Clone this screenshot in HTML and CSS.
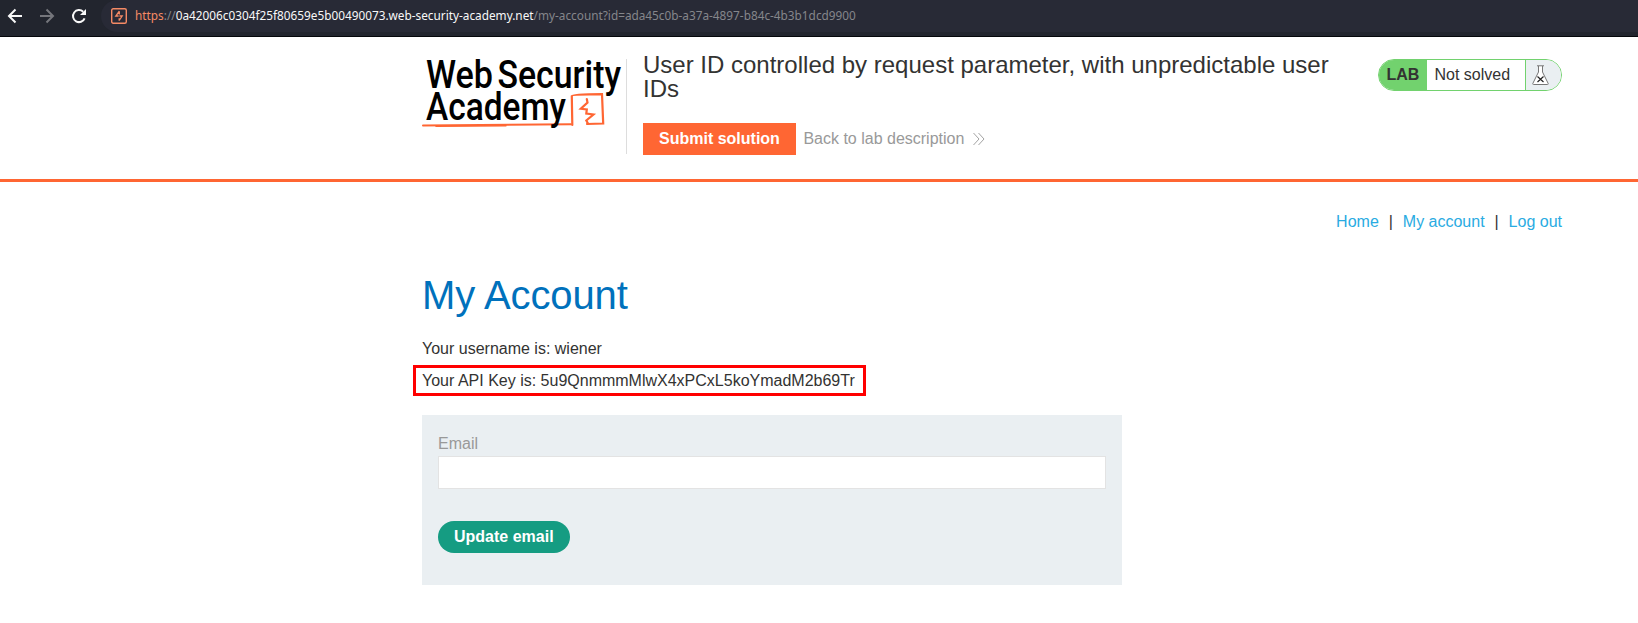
FILE: index.html
```
<!DOCTYPE html>
<html lang="en">
<head>
<meta charset="utf-8">
<title>User ID controlled by request parameter, with unpredictable user IDs</title>
<link rel="stylesheet" href="styles.css">
</head>
<body>
<div class="browser-bar">
  <svg class="nav-icons" width="101" height="32" viewBox="0 0 101 32" fill="none" stroke-width="2">
    <path d="M22 16H9.500M15.500 9.500L9 16l6.500 6.500" stroke="#f8f8f8"/>
    <path d="M40 16h12.500M46.500 9.500L53 16l-6.500 6.500" stroke="#75767c"/>
    <path d="M84.600 18.300A6 6 0 1 1 83.200 11.800" stroke="#f8f8f8"/>
    <path d="M86 9v6h-6z" fill="#f8f8f8"/>
  </svg>
  <div class="url">
    <svg width="16" height="16" viewBox="0 0 16 16" fill="none" stroke="#f58a65">
      <rect x=".7" y=".7" width="14.600" height="14.600" rx="1.500" stroke-width="1.400"/>
      <path d="M8.300 3.200L4.800 8H7.600M8.200 12.800V10.200M8.300 3.200V6.500M8.200 12.500L11.200 8H8.500" stroke-width="1.300"/>
    </svg>
    <span class="address"><span class="scheme">https</span>://<span class="host">0a42006c0304f25f80659e5b00490073.web-security-academy.net</span>/my-account?id=ada45c0b-a37a-4897-b84c-4b3b1dcd9900</span>
  </div>
</div>
<header class="lab-header">
  <div class="container lab-row">
    <svg class="logo" width="204" height="96" viewBox="0 0 204 96">
      <g fill="none" stroke="#f63" stroke-linecap="round">
        <path d="M1 66.500L149 65.300" stroke-width="2"/>
        <path d="M14 67.200L84 66.800" stroke-width="1.500"/>
        <path d="M150.300 66L149.800 37Q150 35.500 180 35.200L181.200 64.500L165 65" stroke-width="2.200"/>
        <path d="M164.800 40L165.500 43.500L158.800 49.800L164.800 50.500L164.300 54.500L171.500 55.500L164.300 61.500L166 64.500" stroke-width="2.200"/>
      </g>
      <g class="logo-text">
        <text x="4" y="28.500" textLength="67" lengthAdjust="spacingAndGlyphs">Web</text>
        <text x="75.500" y="28.500" textLength="123.500" lengthAdjust="spacingAndGlyphs">Security</text>
        <text x="4" y="60.800" textLength="140" lengthAdjust="spacingAndGlyphs">Academy</text>
      </g>
    </svg>
    <div class="title-box">
      <h2>User ID controlled by request parameter, with unpredictable user IDs</h2>
      <div class="actions">
        <button class="submit">Submit solution</button>
        <a class="back">Back to lab description</a>
        <svg class="chevrons" width="12" height="12" viewBox="0 0 12 12" fill="none" stroke="#999" stroke-width=".9"><path d="M.5 0l5.500 6-5.500 6M5.500 0L11 6l-5.500 6"/></svg>
      </div>
    </div>
    <div class="status">
      <span class="lab">LAB</span>
      <span class="state">Not solved</span>
      <span class="flask">
        <svg width="17" height="20" viewBox="0 0 17 20" fill="#fff" stroke="#777" stroke-width="1">
          <path d="M6.500 1v6L.8 18.500q-.3 1 .8 1h13.800q1.100 0 .8-1L10.500 7V1"/>
          <path d="M5 .8h7"/><path d="M5.500 11.500l6 5.500m0-5.500l-6 5.500" stroke="#222" stroke-width="1.200"/>
        </svg>
      </span>
    </div>
  </div>
</header>
<main class="container">
  <nav><a>Home</a><span>|</span><a>My account</a><span>|</span><a>Log out</a></nav>
  <h1>My Account</h1>
  <p class="username">Your username is: wiener</p>
  <p class="api-key">Your API Key is: 5u9QnmmmMlwX4xPCxL5koYmadM2b69Tr</p>
  <form>
    <label for="email">Email</label>
    <input id="email" type="email">
    <button class="update" type="button">Update email</button>
  </form>
</main>
</body>
</html>
```
FILE: styles.css
```
* { box-sizing: border-box; }
body { margin: 0; background: #fff; color: #333332; font: 16px/24px "Liberation Sans", Arial, sans-serif; overflow: hidden; }
h1, h2, p { margin: 0; font-weight: 400; }
button { border: 0; padding: 0 16px; height: 32px; color: #fff; font: bold 16px/32px "Liberation Sans", Arial, sans-serif; }
.container { width: 1140px; margin-left: 422px; }

.browser-bar { display: flex; height: 37px; background: #22252e; border-bottom: 1px solid #05070b; }
.url { display: flex; flex: 1; align-items: center; gap: 8px; height: 32px; padding-left: 10px; background: #282a36; border-radius: 16px 0 0 16px; }
.address { margin-bottom: 2px; color: #85868b; font: 11.8px/16px "Noto Sans", sans-serif; white-space: nowrap; }
.scheme { color: #f58a65; }
.host { color: #f8f8f8; }

.lab-header { height: 145px; border-bottom: 3px solid #f63; }
.lab-row { display: flex; align-items: flex-start; padding-top: 15px; }
.logo { flex: none; margin-top: 7px; overflow: visible; }
.logo-text { fill: #000; font: 500 38px Roboto, sans-serif; }
.title-box { width: 735px; height: 95px; margin-top: 7px; padding-left: 16px; border-left: 1px solid #ddd; }
.title-box h2 { margin-top: -6px; font-size: 24px; line-height: 24px; }
.actions { display: flex; align-items: center; margin-top: 22px; }
.submit { background: #f63; }
.back { margin-left: 7.5px; color: #999; }
.chevrons { margin-left: 9px; }
.status { display: flex; height: 32px; width: 184px; margin: 7px 0 0 auto; border: 1px solid #72d26e; border-radius: 16px; overflow: hidden; line-height: 30px; }
.lab { width: 48px; padding-left: 7.5px; background: #72d26e; font-weight: bold; }
.state { width: 98px; padding-left: 7.5px; }
.flask { flex: 1; padding: 5px 0 0 5.5px; background: #eaeff2; border-left: 1px solid #72d26e; line-height: 0; }

nav { display: flex; justify-content: flex-end; padding-top: 28px; }
nav a { color: #29abe2; }
nav span { width: 24px; text-align: center; }
h1 { margin-top: 37px; color: #0071bc; font-size: 40px; line-height: 48px; letter-spacing: -.1px; }
.username { margin-top: 18px; }
.api-key { width: 453px; height: 31px; margin: 4px 0 0 -9.5px; padding-left: 6.5px; border: 3px solid #f00; line-height: 26px; }
form { width: 700px; height: 170px; margin-top: 19px; padding: 17px 16px 16px; background: #eaeff2; }
label { display: block; height: 24px; color: #999; }
input { display: block; width: 668px; height: 33px; border: 1px solid #e3e3e3; background: #fff; }
.update { display: block; margin-top: 32px; background: #159c82; border-radius: 16px; }
```
